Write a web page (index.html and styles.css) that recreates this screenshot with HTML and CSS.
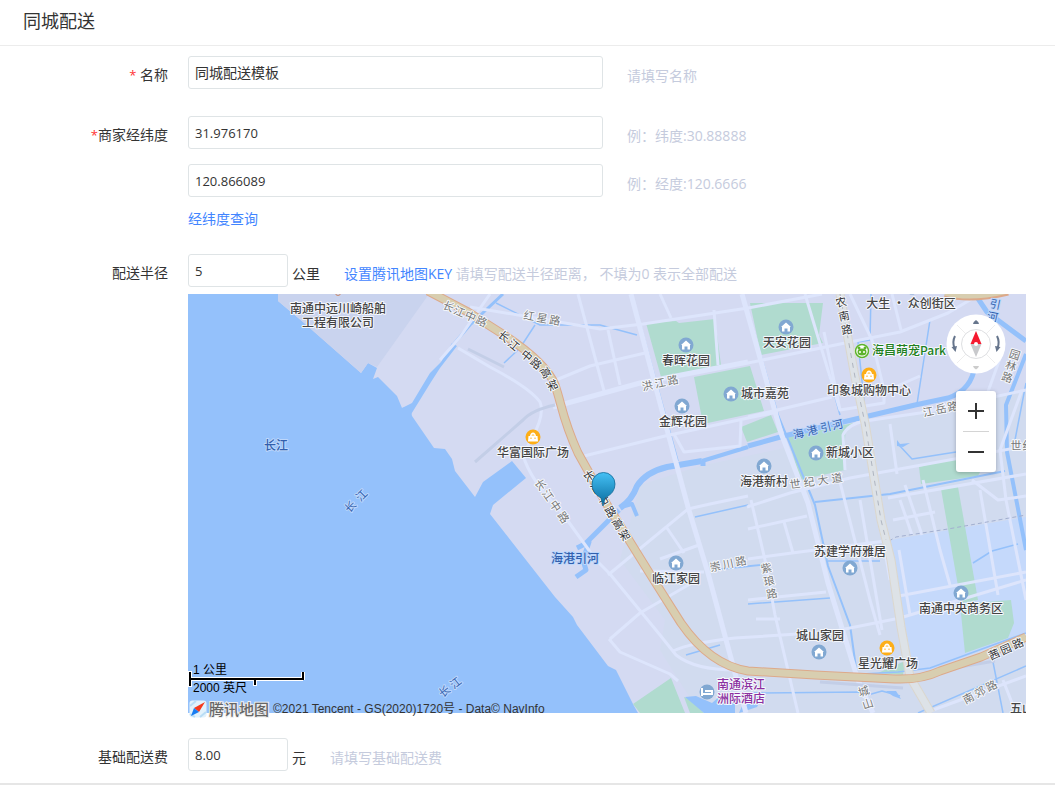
FILE: index.html
```html
<!DOCTYPE html>
<html lang="zh-CN">
<head>
<meta charset="utf-8">
<title>同城配送</title>
<link rel="stylesheet" href="styles.css">
</head>
<body>
<header class="page-head"><h1>同城配送</h1></header>
<form class="form">
  <div class="row row-name">
    <label class="label" for="name"><span class="req">*</span> 名称</label>
    <div class="field"><input class="input" id="name" type="text" value="同城配送模板"><span class="hint hint-wide">请填写名称</span></div>
  </div>
  <div class="row row-geo">
    <label class="label" for="lat"><span class="req">*</span>商家经纬度</label>
    <div class="stack">
      <div class="field"><input class="input num" id="lat" type="text" value="31.976170"><span class="hint hint-wide">例：纬度:30.88888</span></div>
      <div class="field"><input class="input num" type="text" aria-label="经度" value="120.866089"><span class="hint hint-wide">例：经度:120.6666</span></div>
      <a class="link" href="#">经纬度查询</a>
    </div>
  </div>
  <div class="row row-radius">
    <label class="label" for="radius">配送半径</label>
    <div class="radius">
      <div class="field"><input class="input num short" id="radius" type="text" value="5"><span class="unit">公里</span><span class="hint"><a class="link" href="#">设置腾讯地图KEY</a> 请填写配送半径距离， 不填为0 表示全部配送</span></div>
      <div class="map">
        <svg class="map-canvas" viewBox="188 294 838 419" role="img" aria-label="地图">
          <defs>
            <linearGradient id="pinfill" x1="0" y1="0" x2="0" y2="1"><stop offset="0" stop-color="#45c0f5"/><stop offset="1" stop-color="#076a9c"/></linearGradient>
            <g id="home"><circle r="7.500" fill="#81a8d2"/><path d="M-5 0L0-4.500L5 0H4V4.500H1.500V1.500H-1.500V4.500H-4V0Z" fill="#fff"/></g>
            <g id="mall"><circle r="7.500" fill="#fdae18"/><path d="M-5 4.500L-4.500-1H-3Q-2.500-4.500 0-4.500T3-1H4.500L5 4.500Z" fill="#fff"/><path d="M-1.500-1Q-1.500-3 0-3T1.500-1Z" fill="#fdd486"/><path d="M-2 .5V2M2 .5V2" stroke="#fdae18"/></g>
          </defs>
          <rect x="188" y="294" width="838" height="419" fill="#94c1fb"/>
          <path fill="#d4daf2" d="M278 294V301L303 322L361 373L368 363L377 368L373 379L378 377L397 396L402 408L410 406L412 416L434 448L445 449L452 459L455 471L475 497L483 482L512 461L526 478L493 505L490 514L555 597L573 617L577 625L608 666L616 670L634 706L638 713H1026V294Z"/>
          <path fill="#c9d3ee" d="M278 294V301L303 322L361 373L368 363L377 367L429 294Z"/>
          <path fill="#d1dbef" d="M640 485L700 466L780 449L880 420L1026 390V713H700L676 676L660 650L665 620L620 560Z"/>
          <path fill="#c5d9fb" d="M889 543Q890 540 896 539L1026 517V633L928 671L914 670Z"/>
          <g fill="#b0dbcf">
            <path d="M646 323L676 321L679 323L715 319L721 365L661 377Z"/>
            <path d="M750 303H823L819 335L823 343L761 355Z"/>
            <path d="M694 377L750 366L764 411L703 424Z"/>
            <path d="M741 427L771 415L778 432L747 442Z"/>
            <path d="M788 437L858 422L847 427Q844 430 845 470L800 480Z"/>
            <path d="M919 467L956 458L980 472L978 476L921 484Z"/>
            <path d="M941 489L958 487L978 600L961 603Z"/>
            <path d="M960 604L1011 600L1014 623L1008 638L965 653Z"/>
            <path d="M633 704L671 678L685 713H640Z"/>
            <path d="M878 673L905 661L903 675Z"/>
            <path d="M684 697L692 700L704 713H690Z"/>
          </g>
          <path fill="#94c1fb" d="M402 408L412 403L430 373L441 362L452 343L457 346L440 368L431 382L410 416ZM685 697L696 696L712 703L720 696L735 700V713H704ZM745 699L763 696L757 707L739 713Z"/>
          <g class="water">
            <path d="M452 346L470 325L503 294" stroke-width="3"/>
            <path d="M496 303L540 325L600 325L637 335M535 325L520 348L504 363" stroke-width="1.500"/>
            <path d="M619 510L585 544" stroke-width="5"/>
            <path d="M577 548L589 542L583 560L586 570L576 577" stroke-width="5"/>
            <path d="M620 508Q632 500 637 486Q646 472 667 467L702 461" stroke-width="6"/>
            <path d="M702 461L748 447" stroke-width="4"/><path d="M703 461V466" stroke-width="5"/>
            <path d="M621 507L632 504L637 516" stroke-width="4"/>
            <path d="M748 446L784 436L860 418L915 405L948 398Q972 390 975 365" stroke-width="5"/>
            <path d="M975 294L987 312L1026 341" stroke-width="5"/>
            <path d="M1026 354L1006 405L1007 452L1026 550" stroke-width="4"/>
            <path d="M632 294L678 461" stroke-width="1.500"/><path d="M748 312L778 415L815 505L828 566L850 625L857 675L872 713" stroke-width="2"/>
            <path d="M871 294L870 340M930 320L917 404M899 445L912 459L956 452M828 371L840 415M858 342L866 420M858 342L870 340M1026 383L1015 440" stroke-width="1.500"/>
            <path d="M695 517L748 505M713 570L762 565M748 604L830 598M748 566L770 564M686 655L720 645M748 693L861 692L868 695L882 691L900 696M993 662L1003 713M918 713L1026 666M828 561H880M973 563L992 551L1018 544" stroke-width="1.500"/>
            <path d="M815 502L890 494L950 482L1005 471" stroke-width="2"/>
            <path d="M862 674L898 672L930 668L1026 633" stroke-width="1.500"/>
          </g>
          <g fill="#94c1fb"><path d="M897 440L900 444L910 443L903 447L897 446ZM886 691L896 691L901 699L893 696Z"/></g>
          <g class="road wide">
            <path d="M631 294L668 433L688 507L708 573L735 673L746 713"/>
            <path d="M742 294L757 347L781 433L808 503L828 583L858 680L873 713"/>
            <path d="M553 407L640 383L748 362"/>
          </g>
          <g class="road">
            <path d="M440 360L460 337L490 294M470 307L530 317L600 329L643 324L748 308L822 294"/>
            <path d="M458 348L490 367Q530 388 540 402Q545 415 532 438L523 455Q530 480 560 510L596 560L610 574L660 635L676 655Q695 670 735 670"/>
            <path d="M556 380L590 366L645 353M578 294L604 391M608 330L620 385M660 294L671 318M718 365L714 310"/>
            <path d="M580 457L665 436L748 418L778 412M674 434L684 452L740 446L741 420"/>
            <path d="M608 575L688 509L710 504L748 496M667 528L684 553M660 559L699 545M640 571L704 572M610 639L640 613L690 584M609 639L620 652L670 674L678 681"/>
            <path d="M673 651Q690 643 735 638L830 632L900 618L1026 580"/>
            <path d="M748 363L845 343L900 332L948 313L980 294M748 417L832 397M748 559L792 553L885 541M748 529L807 516M748 600L826 592M756 619H780"/>
            <path d="M751 500L765 560L775 615L798 713M784 522L793 553M805 294L840 410L884 403V390L872 340L850 294M824 332L840 410"/>
            <path d="M747 507L790 493L850 478L1026 446M845 470L843 435Q848 424 865 421L920 413L1026 390M890 424L897 474"/>
            <path d="M888 390L920 376M892 294L901 330M1003 350L985 400"/>
            <path d="M888 498L1026 474M860 500L882 630M876 500L890 580M840 482L870 600L880 635"/>
            <path d="M893 520L935 512M900 500L912 535M923 480L940 550L950 585M905 485L922 535M980 490L998 595M899 596L1026 572M899 550L910 615M972 480L998 500L1026 496"/>
            <path d="M933 710L1026 676M1003 680L1016 713"/>
            <path d="M1022 390L1000 450L1006 500L1026 600"/>
          </g>
          <g class="road dim"><path d="M475 462L523 420Q532 410 555 405M468 349L504 367M820 682L903 688M936 671L995 661"/></g>
          <path class="dash" d="M889 541L896 537L948 529L1026 515"/>
          <g fill="none" stroke-linejoin="round">
            <path stroke="#dbd7ce" stroke-width="9" d="M840 294L855 377L865 423L881 520L891 560L901 627L910 677L931 713"/>
            <path stroke="#dde2e7" stroke-width="7" d="M840 294L855 377L865 423L881 520L891 560L901 627L910 677L931 713"/>
            <path stroke="#afb5c0" stroke-width="1" stroke-dasharray="5 5" d="M840 294L855 377L865 423L881 520L886 540"/>
            <path stroke="#dda98a" stroke-width="9" d="M428 291L468 312L501 333Q546 362 555 385C562 405 562 418 578 453L606 503L655 582L681 623Q710 665 748 671L815 675L895 679Q921 680 940 671L981 657L1026 637"/>
            <path stroke="#d8ceb0" stroke-width="7" d="M428 291L468 312L501 333Q546 362 555 385C562 405 562 418 578 453L606 503L655 582L681 623Q710 665 748 671L815 675L895 679Q921 680 940 671L981 657L1026 637"/>
            <path stroke="#dda98a" stroke-width="7" d="M945 294Q970 301 1008 292"/><path stroke="#d8ceb0" stroke-width="5" d="M945 293Q970 300 1008 291"/>
          </g>
          <g class="place">
            <text x="338" y="313">南通中远川崎船舶</text><text x="338" y="327">工程有限公司</text>
            <text x="686" y="365">春晖花园</text><text x="787" y="347">天安花园</text><text x="911" y="308">大生 · 众创街区</text>
            <text x="765" y="398">城市嘉苑</text><text x="683" y="426">金辉花园</text><text x="869" y="395">印象城购物中心</text>
            <text x="533" y="457">华富国际广场</text><text x="850" y="457">新城小区</text><text x="764" y="486">海港新村</text>
            <text x="850" y="556">苏建学府雅居</text><text x="676" y="583">临江家园</text><text x="961" y="613">南通中央商务区</text>
            <text x="820" y="640">城山家园</text><text x="888" y="668">星光耀广场</text><text x="1022" y="713">五山</text>
            <text class="park" x="909" y="355">海昌萌宠Park</text>
            <text class="river" x="276" y="450">长江</text><text class="river" x="575" y="563">海港引河</text>
            <text class="hotel" x="741" y="689">南通滨江</text><text class="hotel" x="741" y="703">洲际酒店</text>
          </g>
          <g class="street river">
            <text transform="translate(356 501) rotate(-45)" x="-8 8" y="4">长江</text>
            <text transform="translate(450 687) rotate(-38)" x="-7 7" y="4">长江</text>
            <text transform="translate(818 429) rotate(-13)" x="-20 -6 8 20" y="4">海港引河</text>
            <text transform="translate(994 310) rotate(12)" x="0 0" y="-2 11">引河</text>
          </g>
          <g class="street">
            <text transform="translate(465 314) rotate(24)" x="-18 -6 6 18" y="4">长江中路</text>
            <text transform="translate(542 318) rotate(10)" x="-13 0 13" y="4">红星路</text>
            <text transform="translate(660 383) rotate(-12)" x="-13 0 13" y="4">洪江路</text>
            <text transform="translate(552 501) rotate(55)" x="-20 -7 6 20" y="4">长江中路</text>
            <text transform="translate(816 481) rotate(-8)" x="-21 -7 7 21" y="4">世纪大道</text>
            <text transform="translate(941 409) rotate(-12)" x="-13 0 12" y="4">江岳路</text>
            <text transform="translate(1011 366) rotate(18)" x="0 0 0" y="-8 4 16">园林路</text>
            <text x="1016 1028" y="450">世纪</text>
            <text transform="translate(728 564) rotate(-12)" x="-13 0 13" y="4">崇川路</text>
            <text transform="translate(769 581) rotate(-12)" x="0 0 0" y="-9 4 17">紫琅路</text>
            <text transform="translate(866 698) rotate(-18)" x="0 0" y="-3 10">城山</text>
            <text transform="translate(980 692) rotate(-28)" x="-13 0 13" y="4">南郊路</text>
          </g>
          <g class="street dark">
            <text transform="translate(844 316) rotate(-12)" x="0 0 0" y="-10 4 18">农南路</text>
            <text transform="translate(520 350) rotate(40)" x="-21 -8 9 21" y="4">长江中路</text>
            <text transform="translate(549 379) rotate(62)" x="-7 7" y="4">高架</text>
            <text transform="translate(607 506) rotate(59)" x="-35 -21 -7 7 21 34" y="4">长江中路高架</text>
            <text transform="translate(1006 649) rotate(-24)" x="-13 0 13" y="4">茜园路</text>
          </g>
          <g>
            <use href="#home" x="686" y="345"/><use href="#home" x="786" y="327"/><use href="#home" x="731" y="394"/><use href="#home" x="682" y="406"/>
            <use href="#home" x="816" y="453"/><use href="#home" x="764" y="466"/><use href="#home" x="850" y="568"/><use href="#home" x="676" y="563"/>
            <use href="#home" x="961" y="593"/><use href="#home" x="819" y="652"/>
            <use href="#mall" x="533" y="437"/><use href="#mall" x="869" y="375"/><use href="#mall" x="887" y="648"/>
            <circle cx="707" cy="692" r="7.500" fill="#81a8d2"/><path d="M702 688V696M702 694H712V691H705" fill="none" stroke="#fff" stroke-width="2"/>
            <circle cx="862" cy="351" r="7.500" fill="#fff"/><circle cx="862" cy="351" r="6.500" fill="#fff" stroke="#5db32c" stroke-width="1.500"/><ellipse cx="862" cy="352" rx="4.500" ry="3.500" fill="#5db32c"/><circle cx="859" cy="348" r="1.500" fill="#5db32c"/><circle cx="865" cy="348" r="1.500" fill="#5db32c"/><circle cx="860" cy="352" r="1" fill="#fff"/><circle cx="864" cy="352" r="1" fill="#fff"/>
            <circle cx="338" cy="293" r="2.500" fill="none" stroke="#c98a6c"/><circle cx="912" cy="287" r="7.500" fill="#81a8d2"/>
            <path d="M603 506L601 498Q592 493 592 484A11 11 0 0 1 615 484Q615 493 605 498Z" fill="url(#pinfill)" stroke="#116a98" stroke-width=".8"/>
          </g>
        </svg>
        <div class="compass">
          <svg viewBox="0 0 60 60" aria-hidden="true">
            <circle cx="30" cy="30" r="29.500" fill="#fff"/><path d="M11 11L49 49M49 11L11 49" stroke="#eee"/><circle cx="30" cy="30" r="14.500" fill="#fff" stroke="#dedfe2"/>
            <path d="M30 17L24.500 30H35.500Z" fill="#f5192f"/><path d="M24.500 30L30 43L35.500 30Z" fill="#c8c9cc"/><circle cx="30" cy="30" r="2" fill="#fff"/>
            <path d="M27 10Q27 8 30 6Q33 8 33 10Z" fill="#66758c"/><path d="M27 52H33Q32 55 30 55.500Q28 55 27 52Z" fill="#ccc"/>
            <path d="M9 22Q6 28 8.500 34M51 22Q54 28 51.500 34" fill="none" stroke="#66758c" stroke-width="2"/><path d="M5.500 33L11 32L9.500 38ZM54.500 33L49 32L50.500 38Z" fill="#66758c"/>
          </svg>
        </div>
        <div class="zoom">
          <button type="button" aria-label="放大"><svg viewBox="0 0 16 16"><path d="M0 8H16M8 0V16"/></svg></button>
          <button type="button" aria-label="缩小"><svg viewBox="0 0 16 16"><path d="M0 8H16"/></svg></button>
        </div>
        <div class="scale"><span>1 公里</span>
          <svg viewBox="0 0 118 16" aria-hidden="true"><g fill="none"><path d="M2 0V16M2 8H115M115 1V9M67 8V15" stroke="#fff" stroke-width="4"/><path d="M2 1V15M1 8H116M115 1V9M67 8V14" stroke="#000" stroke-width="2"/></g></svg>
          <span>2000 英尺</span></div>
        <div class="credit">
          <svg viewBox="0 0 18 18" aria-hidden="true"><rect x=".5" y=".5" width="17" height="17" rx="3" fill="#e2f2fc"/><path d="M1 6L7 1M1 14L6 17M11 17L17 12" stroke="#b9ddf5" stroke-width="2"/><path d="M16 2L5 8L10 12Z" fill="#f5391c"/><path d="M2 16L5 8L10 12Z" fill="#187df2"/></svg>
          <strong>腾讯地图</strong><small>©2021 Tencent - GS(2020)1720号 - Data© NavInfo</small>
        </div>
      </div>
    </div>
  </div>
  <div class="row row-fee">
    <label class="label" for="fee">基础配送费</label>
    <div class="field"><input class="input num short" id="fee" type="text" value="8.00"><span class="unit">元</span><span class="hint">请填写基础配送费</span></div>
  </div>
</form>
</body>
</html>
```
FILE: styles.css
```css
* { box-sizing: border-box; }
body {
  margin: 0;
  background: #fff;
  color: #333;
  font: 14px/20px "Open Sans", "Noto Sans CJK SC", sans-serif;
}
.page-head { height: 46px; padding: 8px 23px; border-bottom: 1px solid #ececec; }
.page-head h1 { margin: 0; font-size: 18px; line-height: 26px; font-weight: 400; }
.form { padding: 10px 29px 12px 0; border-bottom: 2px solid #e6e6e6; }
.row { display: grid; grid-template-columns: 168px minmax(0, 1fr); column-gap: 20px; }
.row-name { margin-bottom: 27px; }
.row-geo { margin-bottom: 25px; }
.row-radius { margin-bottom: 25px; }
.label { padding-top: 9px; text-align: right; }
.req { color: #f33; font-size: 13px; }
.field { display: flex; align-items: flex-start; height: 33px; }
.input {
  width: 415px;
  height: 33px;
  padding: 0 6px 2px;
  border: 1px solid #dfe4e6;
  border-radius: 3px;
  background: #fff;
  color: #333;
  font: inherit;
}
.num { padding-bottom: 0; font-size: 13px; }
.short { width: 100px; }
.hint { padding-top: 10px; margin-left: 24px; color: #c5cbdd; white-space: nowrap; }
.hint-wide { margin-left: 24px; }
.unit { padding: 10px 0 0 4px; }
.link { color: #4285ff; text-decoration: none; }
.stack { display: flex; flex-direction: column; align-items: flex-start; gap: 15px; }
.stack .link { margin-top: -3px; }
.radius .field { margin-bottom: 7px; }

.map { position: relative; font-size: 12px; }
.map-canvas { display: block; width: 100%; height: auto; }
.water { fill: none; stroke: #94c1fb; stroke-linejoin: round; }
.road { fill: none; stroke: #dde5fc; stroke-width: 3; stroke-linejoin: round; }
.wide { stroke-width: 5; }
.dim { stroke: #c3cee7; }
.dash { fill: none; stroke: #a2afd0; stroke-dasharray: 4 3; }
.place, .street {
  font-size: 12px;
  text-anchor: middle;
  fill: #444;
  stroke: #f5f7fc;
  stroke-width: 2px;
  paint-order: stroke;
  stroke-linejoin: round;
}
.place { font-weight: 500; font-family: "Noto Sans CJK SC", sans-serif; }
.street { font-size: 11px; fill: #777; }
.dark { fill: #333; }
.river { fill: #315fae; stroke: #bdd7fb; }
.park { fill: #218020; }
.hotel { fill: #8b30a0; }

.compass { position: absolute; top: 20px; right: 20px; width: 60px; height: 60px; }
.compass svg { display: block; }
.zoom {
  position: absolute;
  top: 97px;
  right: 30px;
  width: 40px;
  padding: 0 7px;
  border-radius: 3px;
  background: #fff;
  box-shadow: 0 1px 4px rgba(0, 0, 0, .25);
}
.zoom button { display: flex; align-items: center; justify-content: center; width: 26px; height: 40px; padding: 0; border: 0; background: none; }
.zoom button + button { height: 41px; border-top: 1px solid #d4d4d4; }
.zoom svg { width: 16px; height: 16px; stroke: #333; stroke-width: 2; }
.scale { position: absolute; left: 1px; bottom: 18px; display: flex; flex-direction: column; color: #000; line-height: 14px; }
.scale span { padding-left: 4px; font-family: "Liberation Sans", "Noto Sans CJK SC", sans-serif; }
.scale svg { width: 118px; height: 16px; margin: -6px 0 -6px -1px; }
.credit { position: absolute; left: 1px; bottom: -6px; display: flex; align-items: center; line-height: 20px; }
.credit svg { width: 18px; height: 18px; margin-right: 2px; }
.credit strong {
  color: #666;
  font-size: 15px;
  font-weight: 500;
  -webkit-text-stroke: 2px #eee;
  paint-order: stroke;
}
.credit small { margin-left: 4px; font: 12px/16px "Liberation Sans", "Noto Sans CJK SC", sans-serif; }
```
